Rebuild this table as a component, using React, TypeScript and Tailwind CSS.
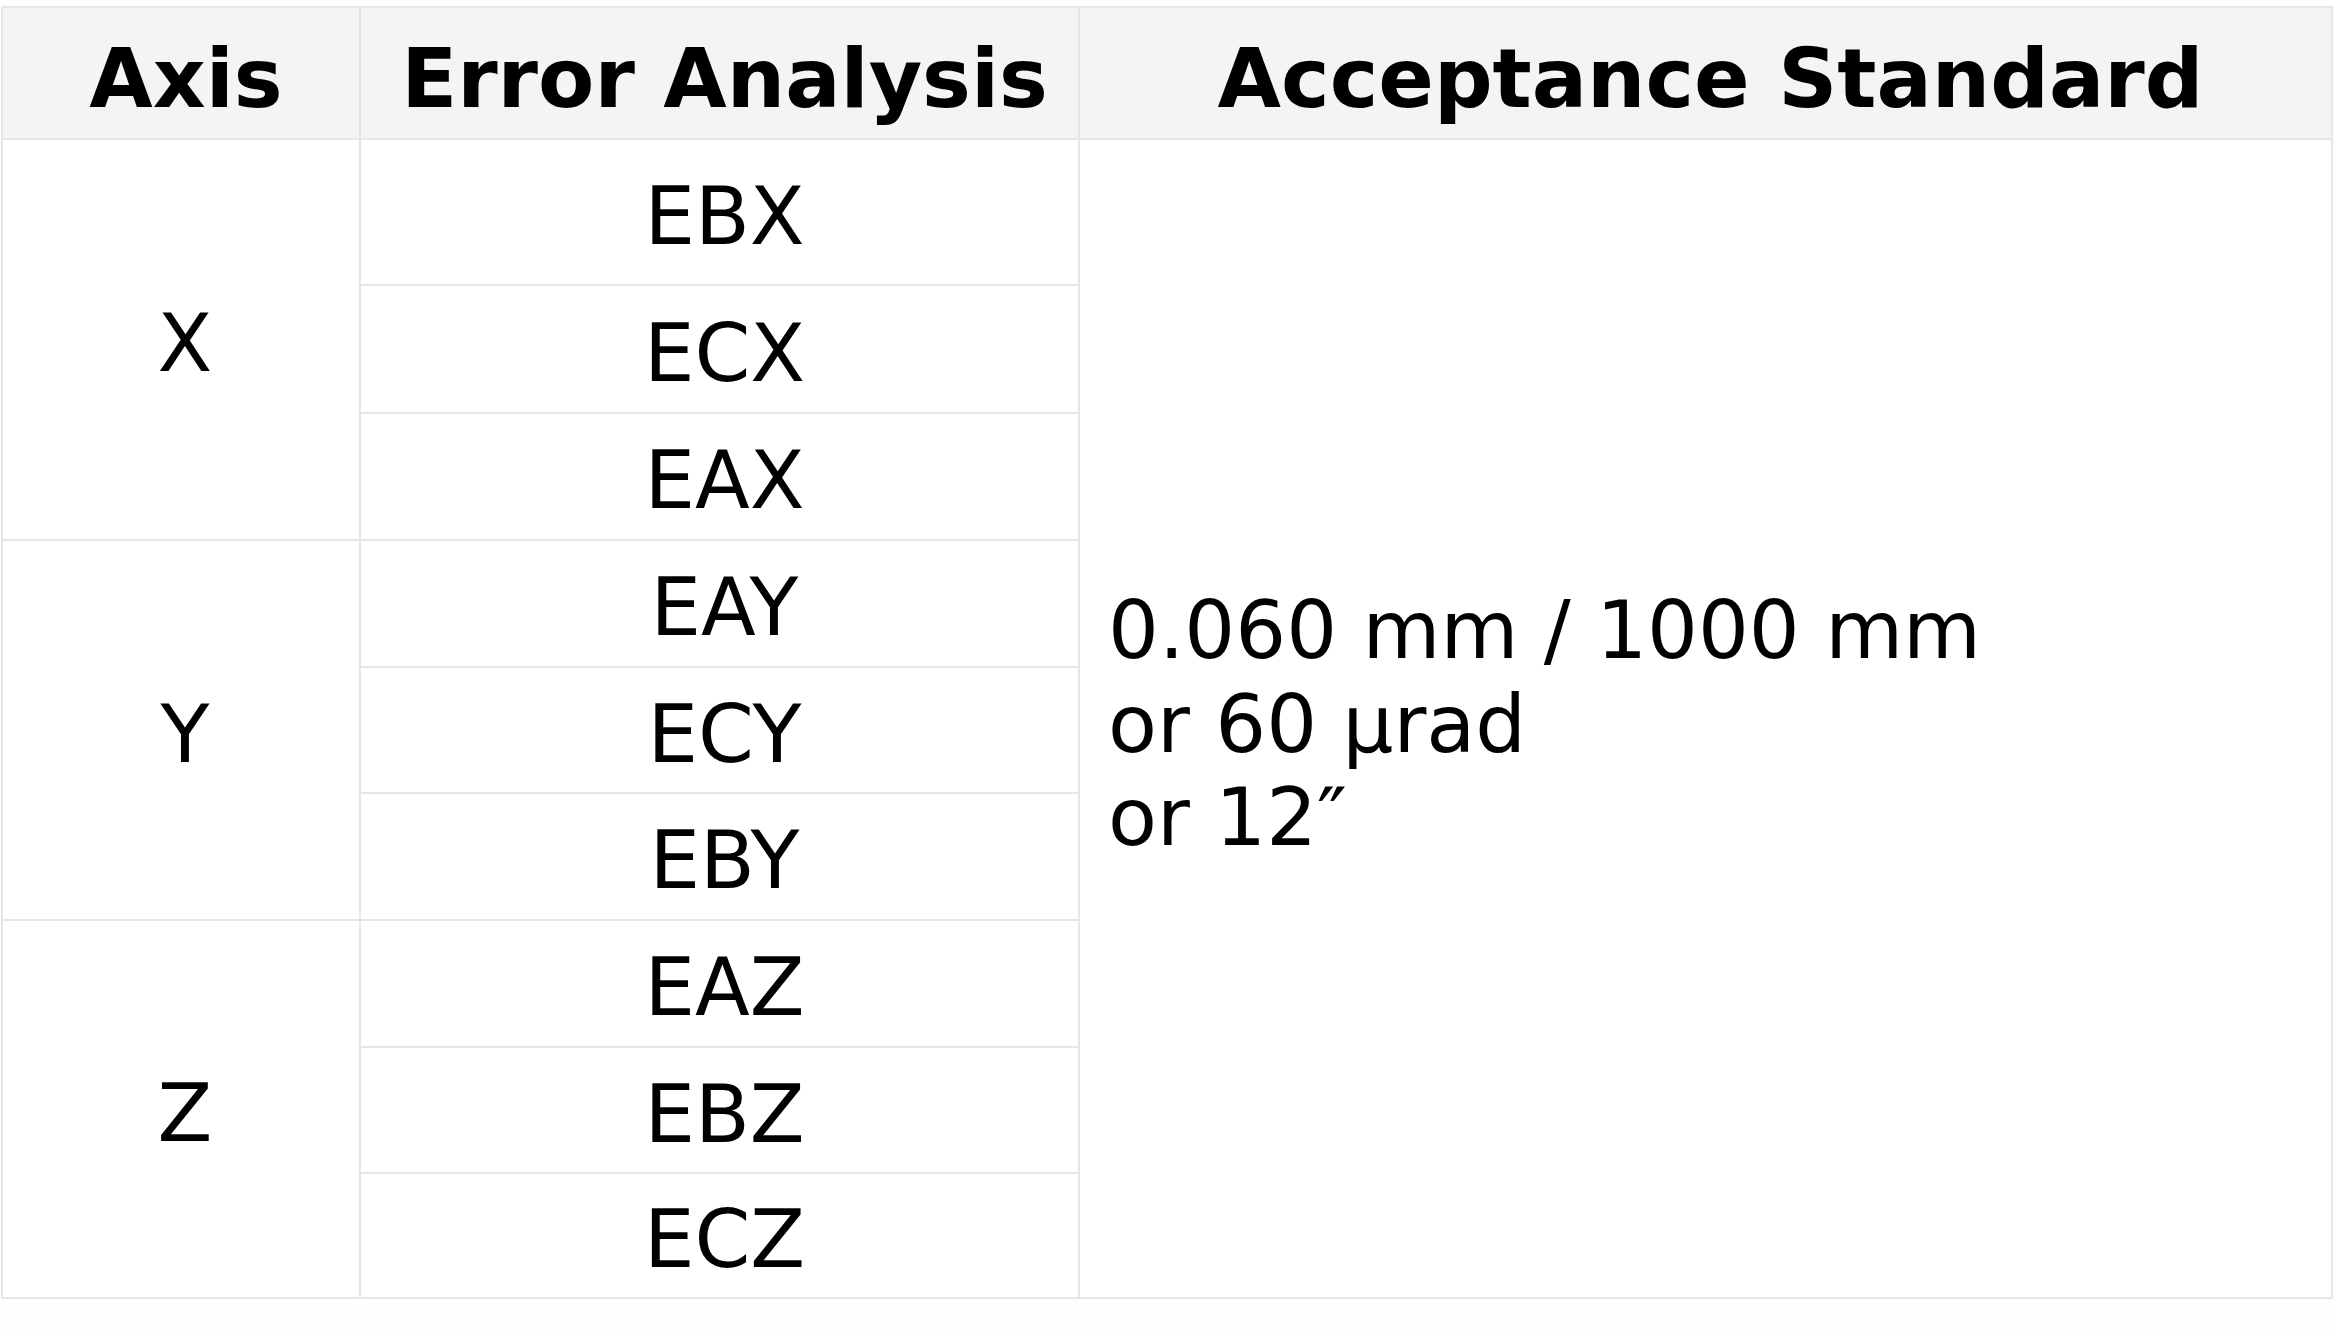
const rows = [
  { axis: "X", codes: ["EBX", "ECX", "EAX"] },
  { axis: "Y", codes: ["EAY", "ECY", "EBY"] },
  { axis: "Z", codes: ["EAZ", "EBZ", "ECZ"] },
];

export default function App() {
  return (
    <div
      className="min-h-[1332px] w-[2336px] bg-[#fefefe] pl-[1px] pt-[6px] text-black"
      style={{ fontFamily: '"DejaVu Sans", Verdana, sans-serif' }}
    >
      <div className="grid w-[2332px] grid-cols-[356px_717px_1251px] grid-rows-[130px_144px_126px_125px_125px_124px_125px_125px_124px_123px] gap-[2px] border-2 border-[#e6e6e6] bg-[#e6e6e6]">
        <div className="flex items-center justify-center bg-[#f4f4f4] pl-[10px] pt-[10px] text-[82px] font-bold leading-[normal]">Axis</div>
        <div className="flex items-center justify-center bg-[#f4f4f4] pl-[10px] pt-[10px] text-[82px] font-bold leading-[normal]">Error Analysis</div>
        <div className="flex items-center justify-center bg-[#f4f4f4] pl-[10px] pt-[10px] text-[82px] font-bold leading-[normal]">Acceptance Standard</div>

        {/* axis column: each group spans three rows */}
        {rows.map((g, i) => (
          <div
            key={g.axis}
            className="col-start-1 row-span-3 flex items-center justify-center bg-white pl-[8px] pt-[8px] text-[80px] leading-[normal]"
            style={{ gridRowStart: i * 3 + 2 }}
          >
            {g.axis}
          </div>
        ))}

        {rows.flatMap((g) => g.codes).map((code, i) => (
          <div
            key={code}
            className="col-start-2 flex items-center justify-center bg-white pl-[10px] pt-[8px] text-[80px] leading-[normal]"
            style={{ gridRowStart: i + 2 }}
          >
            {code}
          </div>
        ))}

        <div className="col-start-3 row-span-9 row-start-2 flex items-center bg-white pl-[28px] pt-[12px] text-[80px] leading-[1.17]">
          <div>
            0.060 mm / 1000 mm
            <br />
            or 60 µrad
            <br />
            or 12″
          </div>
        </div>
      </div>
    </div>
  );
}
